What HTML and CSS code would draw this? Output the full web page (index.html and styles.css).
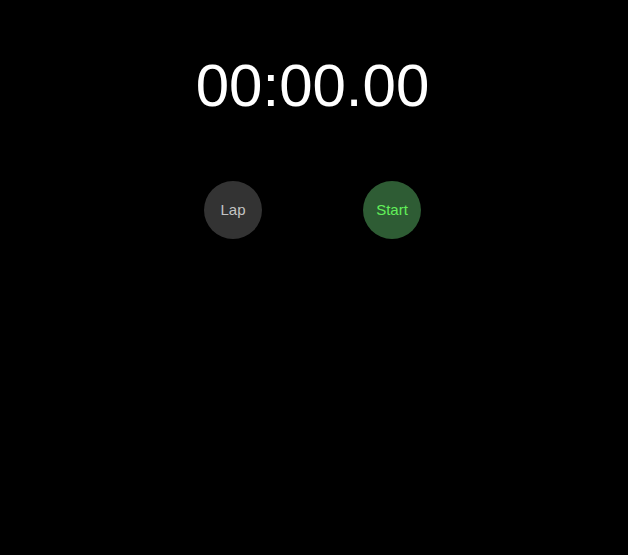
FILE: index.html
```html
<!DOCTYPE html>
<html>
<head>
<meta charset="utf-8">
<link rel="stylesheet" href="styles.css">
</head>
<body>
<main class="stopwatch">
  <div class="time">00:00.00</div>
  <div class="controls">
    <button class="btn btn-lap">Lap</button>
    <button class="btn btn-start">Start</button>
  </div>
</main>
</body>
</html>
```
FILE: styles.css
```css
html, body {
  margin: 0;
  padding: 0;
  background: #000;
  height: 100%;
}
body {
  font-family: "Liberation Sans", Arial, sans-serif;
  color: #fff;
}
.stopwatch {
  display: flex;
  flex-direction: column;
  align-items: center;
  padding-top: 56px;
  padding-right: 3px;
}
.time {
  font-size: 60px;
  line-height: 60px;
  height: 60px;
  color: #fff;
}
.controls {
  display: flex;
  gap: 101px;
  margin-top: 65px;
}
.btn {
  width: 58px;
  height: 58px;
  border-radius: 50%;
  border: none;
  padding: 0 0 2px 0;
  font-family: "Liberation Sans", Arial, sans-serif;
  font-size: 15px;
  cursor: pointer;
}
.btn-lap {
  background: #333333;
  color: #c4c4c4;
}
.btn-start {
  background: #2e5c34;
  color: #62f05a;
}
```
